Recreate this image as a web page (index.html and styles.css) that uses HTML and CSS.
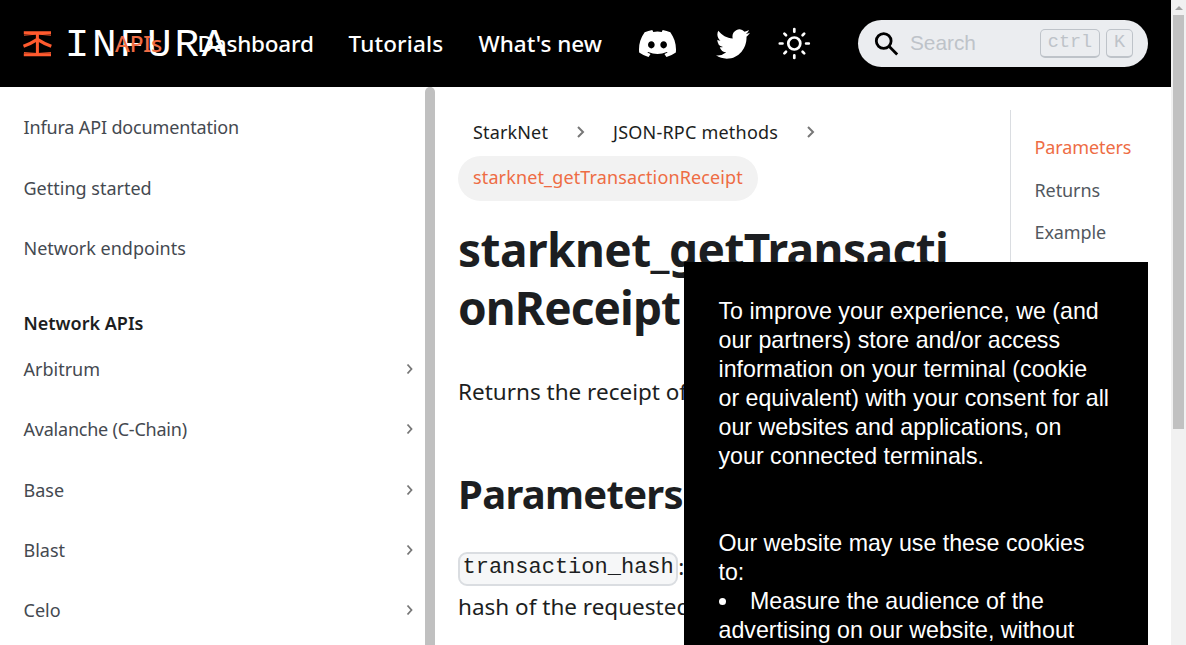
FILE: index.html
```
<!DOCTYPE html>
<html lang="en">
<head>
<meta charset="utf-8">
<title>starknet_getTransactionReceipt | INFURA</title>
<link rel="stylesheet" href="styles.css">
</head>
<body>
<div class="window">
  <div class="page">
    <header class="navbar">
      <a class="logo">
        <svg width="204" height="30" viewBox="0 0 204 30">
          <g fill="none" stroke="#ff5a2e" stroke-width="3">
            <path d="M.8 3.700H28M.8 25.800H28M14.400 4v22"/>
            <path d="M.5 17.200Q8 14.600 14.400 10.400Q20.800 14.600 28.300 17.200" stroke-width="3.200"/>
            <path d="M1 6.200Q14 4 28 6.200M1 23.600Q14 25.400 28 23.600" stroke-width="1"/>
          </g>
          <text class="wordmark" x="0" y="0" transform="translate(41.700 27) scale(1.080 1)">INFURA</text>
        </svg>
      </a>
      <nav class="links">
        <a class="link link-apis">APIs</a>
        <a class="link link-dashboard">Dashboard</a>
        <a class="link link-tutorials">Tutorials</a>
        <a class="link link-new">What's new</a>
      </nav>
      <div class="tools">
        <svg class="discord" width="37" height="27" viewBox="0 0 127.140 96.360" preserveAspectRatio="none"><path fill="#fff" d="M107.700 8.070A105.150 105.150 0 0 0 81.470 0a72.060 72.060 0 0 0-3.360 6.830 97.680 97.680 0 0 0-29.110 0A72.370 72.370 0 0 0 45.640 0a105.890 105.890 0 0 0-26.250 8.090C2.790 32.650-1.710 56.600.54 80.210a105.730 105.730 0 0 0 32.170 16.150 77.700 77.700 0 0 0 6.890-11.110 68.420 68.420 0 0 1-10.850-5.180c.91-.66 1.800-1.340 2.660-2a75.570 75.570 0 0 0 64.320 0c.87.71 1.760 1.390 2.660 2a68.680 68.680 0 0 1-10.870 5.190 77 77 0 0 0 6.890 11.100 105.250 105.250 0 0 0 32.190-16.140c2.640-27.380-4.510-51.110-18.900-72.150zM42.450 65.690C36.180 65.690 31 60 31 53s5-12.740 11.430-12.740S54 46 53.890 53s-5.050 12.690-11.440 12.690zm42.240 0C78.410 65.690 73.250 60 73.250 53s5-12.740 11.440-12.740S96.230 46 96.120 53s-5.040 12.690-11.430 12.690z"/></svg>
        <svg class="twitter" width="34" height="30" viewBox="0 2 24 20" preserveAspectRatio="none"><path fill="#fff" d="M23.950 4.570a10 10 0 0 1-2.820.77 4.960 4.960 0 0 0 2.160-2.720c-.95.550-2 .960-3.130 1.180a4.920 4.920 0 0 0-8.380 4.480C7.690 8.100 4.070 6.130 1.640 3.160a4.820 4.820 0 0 0-.67 2.480c0 1.710.87 3.210 2.190 4.100a4.900 4.900 0 0 1-2.230-.62v.06a4.920 4.920 0 0 0 3.950 4.830 5 5 0 0 1-2.210.08 4.940 4.940 0 0 0 4.600 3.420A9.870 9.870 0 0 1 0 19.540a14 14 0 0 0 7.550 2.210c9.050 0 14-7.500 14-13.990 0-.21 0-.42-.02-.63a9.940 9.940 0 0 0 2.460-2.550z"/></svg>
        <svg class="sun" width="34" height="34" viewBox="0 0 34 34" fill="none" stroke="#fff" stroke-width="2.700" stroke-linecap="round"><circle cx="17.300" cy="16.500" r="6"/><path d="M17.300 2v2.700M17.300 28.300v2.700M2.800 16.500h2.700M29.100 16.500h2.700M7.400 6.600l1.600 1.600M25.600 24.800l1.600 1.600M27.200 6.600l-1.600 1.600M9 24.800l-1.600 1.600"/></svg>
      </div>
      <div class="search">
        <svg width="26" height="26" viewBox="0 0 26 26" fill="none" stroke="#000" stroke-width="2.800"><circle cx="9.700" cy="10" r="7.400"/><path d="M15 15.300l8.200 8.200"/></svg>
        <span class="search-text">Search</span>
        <kbd>ctrl</kbd><kbd class="key-k">K</kbd>
      </div>
    </header>
    <div class="body">
      <aside class="sidebar">
        <ul class="menu">
          <li><span class="menu-docs">Infura API documentation</span></li>
          <li><span>Getting started</span></li>
          <li><span>Network endpoints</span></li>
          <li class="category">Network APIs</li>
          <li><span>Arbitrum</span><svg class="chev" viewBox="0 0 8 12"><path d="M1.500 1.500l4 4.500-4 4.500"/></svg></li>
          <li><span class="menu-avalanche">Avalanche (C-Chain)</span><svg class="chev" viewBox="0 0 8 12"><path d="M1.500 1.500l4 4.500-4 4.500"/></svg></li>
          <li><span>Base</span><svg class="chev" viewBox="0 0 8 12"><path d="M1.500 1.500l4 4.500-4 4.500"/></svg></li>
          <li><span>Blast</span><svg class="chev" viewBox="0 0 8 12"><path d="M1.500 1.500l4 4.500-4 4.500"/></svg></li>
          <li><span>Celo</span><svg class="chev" viewBox="0 0 8 12"><path d="M1.500 1.500l4 4.500-4 4.500"/></svg></li>
        </ul>
        <div class="side-thumb"></div>
      </aside>
      <main class="content">
        <div class="crumbs">
          <span class="crumb crumb-first">StarkNet</span>
          <svg class="sep" viewBox="0 0 10 14"><path d="M2 2l5 5-5 5"/></svg>
          <span class="crumb crumb-methods">JSON-RPC methods</span>
          <svg class="sep" viewBox="0 0 10 14"><path d="M2 2l5 5-5 5"/></svg>
        </div>
        <div class="pill">starknet_getTransactionReceipt</div>
        <h1><span class="h1-first">starknet_getTransacti</span><br><span class="h1-second">onReceipt</span></h1>
        <p class="intro">Returns the receipt of</p>
        <h2>Parameters</h2>
        <p class="params"><code>transaction_hash</code>: <br>hash of the requested</p>
      </main>
      <aside class="toc">
        <a class="active">Parameters</a>
        <a>Returns</a>
        <a>Example</a>
      </aside>
    </div>
    <section class="consent">
      <p>To improve your experience, we (and<br>our partners) store and/or access<br>information on your terminal (cookie<br>or equivalent) with your consent for all<br>our websites and applications, on<br>your connected terminals.</p>
      <p class="uses">Our website may use these cookies<br>to:<br><span class="bullet"></span>Measure the audience of the<br>advertising on our website, without</p>
    </section>
  </div>
  <div class="scrollbar"><div class="arrow"></div><div class="thumb"></div></div>
</div>
</body>
</html>
```
FILE: styles.css
```
* { box-sizing: border-box; }
body { margin: 0; background: #fff; font-family: "Noto Sans", sans-serif; color: #1c1e21; overflow: hidden; }
.window { display: flex; width: 1186px; height: 645px; overflow: hidden; }
.page { position: relative; width: 1171px; height: 645px; overflow: hidden; }

.navbar { display: flex; align-items: center; height: 87px; padding-left: 23px; background: #000; }
.logo { flex: none; width: 92px; height: 30px; }
.logo svg { display: block; overflow: visible; }
.wordmark { font-family: "Liberation Mono", monospace; font-size: 38px; letter-spacing: 2.600px; fill: #fff; }
.links { display: flex; flex: none; width: 524px; position: relative; font-size: 22.500px; font-weight: 500; color: #fff; }
.link { flex: none; line-height: 30px; white-space: nowrap; }
.link-apis { width: 82.500px; color: #ee6c44; letter-spacing: -.1px; }
.link-dashboard { width: 151px; letter-spacing: -.2px; }
.link-tutorials { width: 130px; letter-spacing: .15px; }
.tools { display: flex; align-items: center; flex: none; width: 219px; }
.twitter { margin-left: 40px; }
.sun { margin-left: 27px; }
.discord, .twitter, .sun { flex: none; }
.search { display: flex; align-items: center; flex: none; width: 290px; height: 47px; padding-left: 16px; border-radius: 24px; background: #ebedf0; font-family: "Liberation Sans", sans-serif; color: #bec3c9; }
.search-text { width: 130px; padding-left: 10px; margin-right: 10px; font-size: 20.800px; line-height: 24px; padding-bottom: 1px; }
kbd { display: block; width: 60px; height: 29px; border: 1px solid #bec3c9; border-bottom-width: 2px; border-radius: 5px; font: 18.500px/26px "Liberation Mono", monospace; text-align: center; }
.key-k { width: 27px; margin-left: 6px; }

.body { display: flex; height: 558px; }
.sidebar { display: flex; flex: none; width: 435px; }
.menu { flex: none; width: 425px; margin: 0; padding: 10px 11px 0 23.500px; list-style: none; font-size: 18px; color: #444950; }
.menu li { display: flex; align-items: center; justify-content: space-between; height: 60.400px; }
.menu .category { padding-top: 29px; font-weight: 600; color: #1c1e21; }
.menu-docs { letter-spacing: -.15px; }
.menu-avalanche { letter-spacing: -.22px; }
.chev { width: 8px; height: 12px; fill: none; stroke: #777; stroke-width: 1.800; }
.side-thumb { width: 10px; height: 600px; border-radius: 5px 5px 0 0; background: #c0c0c0; }

.content { flex: none; width: 575px; padding: 23px 32px 0 23px; }
.crumbs { display: flex; align-items: center; height: 46px; padding: 0 0 2px 15px; font-size: 18px; color: #1c1e21; }
.crumb-first { width: 103px; letter-spacing: .15px; }
.crumb-methods { width: 193px; margin-left: 27px; white-space: nowrap; letter-spacing: .22px; }
.sep { flex: none; width: 10px; height: 14px; fill: none; stroke: #777; stroke-width: 2; }
.pill { width: 300px; height: 45px; padding-left: 15px; border-radius: 23px; background: #f2f2f2; font-size: 18px; line-height: 42px; letter-spacing: .13px; color: #ee6c44; }
h1 { margin: 19px 0 0; font-size: 46px; line-height: 58px; font-weight: 700; white-space: nowrap; letter-spacing: -.55px; }
.h1-second { letter-spacing: -.9px; }
p { margin: 0; white-space: nowrap; }
.intro { margin-top: 36px; font-size: 22.500px; line-height: 40px; }
h2 { margin: 57px 0 0; font-size: 40px; line-height: 50px; font-weight: 700; letter-spacing: -.7px; }
.params { margin-top: 28px; font-size: 22.500px; line-height: 40px; }
code { display: inline-block; height: 34px; padding: 0 2.500px; border: 2px solid #dadde1; border-radius: 9px; background: #f6f7f8; font: 22px/27px "Liberation Mono", monospace; vertical-align: middle; }
.toc { display: flex; flex-direction: column; flex: none; width: 140px; height: 500px; margin-top: 23px; padding: 16px 0 0 23.500px; border-left: 1px solid #dadde1; font-size: 18px; letter-spacing: -.1px; color: #525860; }
.toc a { height: 42.500px; line-height: 42.500px; }
.toc .active { color: #ee6c44; }

/* Cookie notice floats above the article. */
.consent { position: absolute; left: 684px; top: 262px; width: 464px; height: 383px; padding: 35px 34.500px 0; background: #000; color: #fff; font: 23.200px/29px "Liberation Sans", sans-serif; overflow: hidden; }
.uses { margin-top: 58px; }
.bullet { display: inline-block; width: 7px; height: 7px; margin: 0 24.500px 4px 0; border-radius: 50%; background: #fff; }

.scrollbar { flex: none; width: 15px; padding: 6px 2px 0; background: #f1f1f1; }
.arrow { width: 0; height: 4px; margin: 0 auto; border: solid transparent; border-width: 0 4px 4px; border-bottom-color: #a3a3a3; }
.thumb { width: 11px; height: 414px; margin-top: 5px; background: #c1c1c1; }
```
